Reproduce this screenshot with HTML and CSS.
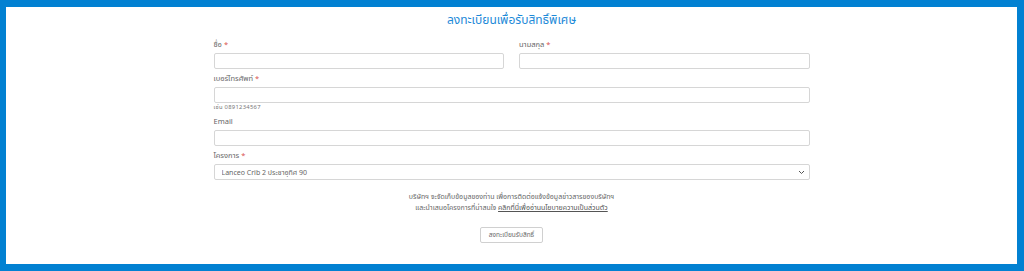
FILE: index.html
```html
<!DOCTYPE html>
<html lang="th">
<head>
<meta charset="utf-8">
<title>ลงทะเบียนเพื่อรับสิทธิ์พิเศษ</title>
<link rel="stylesheet" href="styles.css">
</head>
<body>
<div class="page">
  <h1 class="title">ลงทะเบียนเพื่อรับสิทธิ์พิเศษ</h1>
  <form class="form">
    <div class="row two">
      <div class="field">
        <label class="label">ชื่อ <span class="req">*</span></label>
        <input class="input" type="text">
      </div>
      <div class="field">
        <label class="label">นามสกุล <span class="req">*</span></label>
        <input class="input" type="text">
      </div>
    </div>
    <div class="field">
      <label class="label">เบอร์โทรศัพท์ <span class="req">*</span></label>
      <input class="input" type="text">
      <div class="help">เช่น 0891234567</div>
    </div>
    <div class="field">
      <label class="label">Email</label>
      <input class="input" type="text">
    </div>
    <div class="field">
      <label class="label">โครงการ <span class="req">*</span></label>
      <div class="select-wrap">
        <select class="select">
          <option>Lanceo Crib 2 ประชาอุทิศ 90</option>
        </select>
        <svg class="chev" width="7" height="5" viewBox="0 0 7 5"><path d="M1 1 L3.5 3.5 L6 1" fill="none" stroke="#555" stroke-width="1"/></svg>
      </div>
    </div>
    <p class="note">บริษัทฯ จะจัดเก็บข้อมูลของท่าน เพื่อการติดต่อแจ้งข้อมูลข่าวสารของบริษัทฯ<br>และนำเสนอโครงการที่น่าสนใจ <a class="link" href="#">คลิกที่นี่เพื่ออ่านนโยบายความเป็นส่วนตัว</a></p>
    <div class="actions">
      <button class="btn" type="button">ลงทะเบียนรับสิทธิ์</button>
    </div>
  </form>
</div>
</body>
</html>
```
FILE: styles.css
```css
html, body {
  margin: 0;
  padding: 0;
  background: #0281d2;
}
* { box-sizing: border-box; }
.page {
  height: 271px;
  background: #fff;
  border-style: solid;
  border-color: #0281d2;
  border-width: 7px 7px 7px 6px;
  font-family: "Noto Sans", "Noto Sans Thai", "Noto Sans Thai UI", sans-serif;
  color: #666;
  overflow: hidden;
}
.title {
  margin: 5px 0 0;
  text-align: center;
  font-size: 12px;
  line-height: 15px;
  font-weight: 400;
  color: #1e8ad8;
}
.form {
  width: 596px;
  margin: 12px auto 0;
  display: flex;
  flex-direction: column;
  gap: 4px;
}
.row.two {
  display: grid;
  grid-template-columns: 1fr 1fr;
  gap: 15px;
}
.field {
  display: flex;
  flex-direction: column;
}
.label {
  font-size: 7.5px;
  line-height: 10px;
  margin-bottom: 4px;
  color: #666;
}
.req { color: #d9534f; }
.input, .select {
  height: 16px;
  width: 100%;
  border: 1px solid #d6d6d6;
  border-radius: 2px;
  background: #fff;
  font-family: inherit;
  font-size: 7px;
  color: #666;
  padding: 0 7px;
  margin: 0;
}
.help {
  font-size: 5.8px;
  line-height: 8px;
  margin-bottom: 1px;
  color: #777;
  letter-spacing: 0.3px;
}
.select-wrap {
  position: relative;
}
.select {
  appearance: none;
  -webkit-appearance: none;
  display: block;
}
.chev {
  position: absolute;
  right: 5px;
  top: 6px;
}
.note {
  margin: 7px 0 0;
  text-align: center;
  font-size: 7px;
  line-height: 11px;
  color: #666;
}
.link {
  color: #555;
  text-decoration: underline;
}
.actions {
  display: flex;
  justify-content: center;
  margin-top: 10px;
}
.btn {
  height: 16px;
  width: 63px;
  padding: 0;
  border: 1px solid #d0d0d0;
  border-radius: 2px;
  background: #fff;
  font-family: inherit;
  font-size: 6.5px;
  color: #666;
}
```
